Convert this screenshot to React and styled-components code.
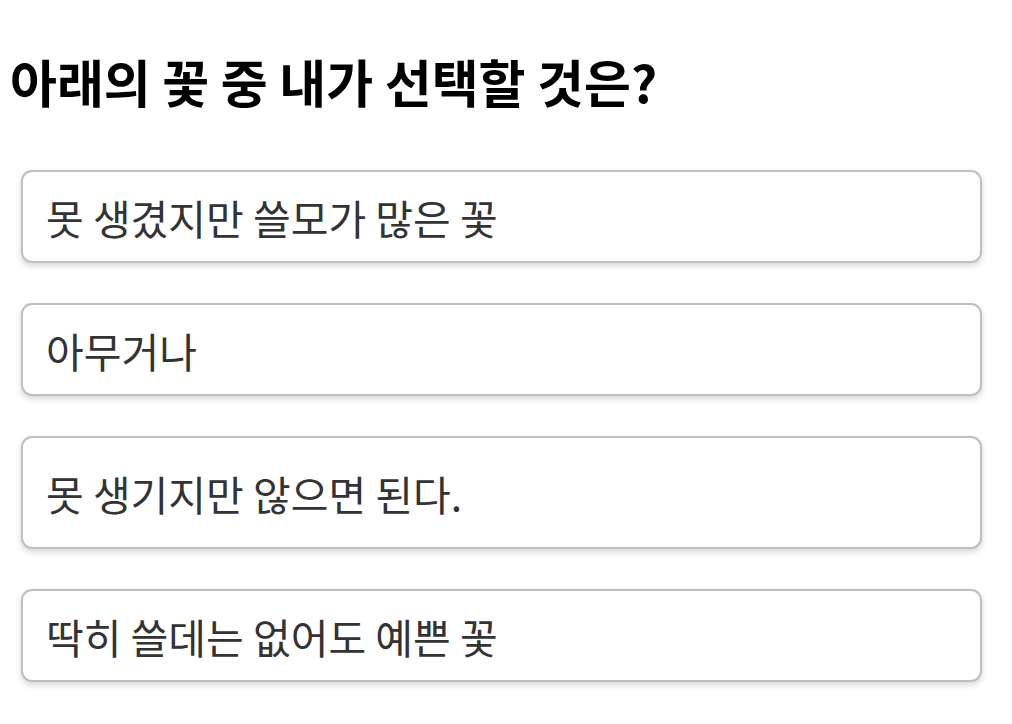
import styled, { createGlobalStyle } from 'styled-components';

const GlobalStyle = createGlobalStyle`
  html, body {
    margin: 0;
    padding: 0;
    background: #fff;
  }
  body {
    font-family: 'Noto Sans CJK KR', 'Noto Sans', sans-serif;
  }
`;

const Page = styled.div`
  padding: 45px 30px 40px 10px;
`;

const Title = styled.h1`
  margin: 0 0 53px;
  font-size: 51px;
  font-weight: 700;
  color: #000;
  line-height: 72px;
`;

const Options = styled.div`
  display: flex;
  flex-direction: column;
  gap: 40px;
  padding-left: 11px;
`;

const Option = styled.button`
  display: flex;
  align-items: center;
  width: 100%;
  height: ${(props) => (props.tall ? '113px' : '93px')};
  padding: 0 23px;
  background: #fff;
  border: 2px solid #bfbfbf;
  border-radius: 11px;
  box-shadow: 0 3px 6px rgba(0, 0, 0, 0.16);
  font-family: inherit;
  font-size: 41px;
  color: #333;
  text-align: left;
  cursor: pointer;
`;

const options = [
  { text: '못 생겼지만 쓸모가 많은 꽃' },
  { text: '아무거나' },
  { text: '못 생기지만 않으면 된다.', tall: true },
  { text: '딱히 쓸데는 없어도 예쁜 꽃' },
];

const App = () => {
  return (
    <>
      <GlobalStyle />
      <Page>
        <Title>아래의 꽃 중 내가 선택할 것은?</Title>
        <Options>
          {options.map((o) => (
            <Option key={o.text} tall={o.tall}>
              {o.text}
            </Option>
          ))}
        </Options>
      </Page>
    </>
  );
};

export default App;
